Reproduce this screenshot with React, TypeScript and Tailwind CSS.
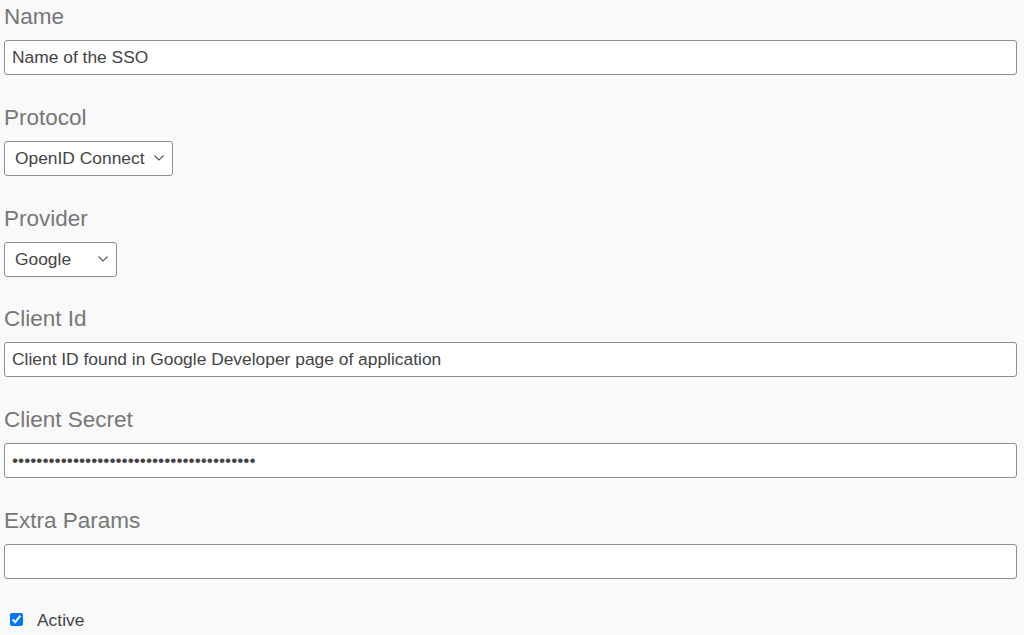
import { useState } from "react";

const labelCls = "block text-[22.5px] leading-[30px] text-[#777777] mb-[8px]";
const inputCls =
  "block w-full h-[35px] rounded-[3px] border border-[#8f8f8f] bg-white px-[7px] text-[17.4px] text-[#444444] outline-none";

function Chevron() {
  return (
    <svg className="pointer-events-none absolute right-[9px] top-[14px]" width="10" height="6" viewBox="0 0 10 6" fill="none">
      <path d="M0.5 0.5 L5 5 L9.5 0.5" stroke="#555" strokeWidth="1.1" />
    </svg>
  );
}

function Select({ value, options, width, onChange }: { value: string; options: string[]; width: string; onChange: (v: string) => void }) {
  return (
    <div className={"relative " + width}>
      <select
        className="block w-full h-[35px] appearance-none rounded-[3px] border border-[#8f8f8f] bg-white pl-[10px] pr-[26px] text-[17.4px] text-[#444444] outline-none"
        value={value}
        onChange={(e) => onChange(e.target.value)}
      >
        {options.map((o) => <option key={o}>{o}</option>)}
      </select>
      <Chevron />
    </div>
  );
}

export default function App() {
  const [form, setForm] = useState({
    name: "Name of the SSO",
    protocol: "OpenID Connect",
    provider: "Google",
    clientId: "Client ID found in Google Developer page of application",
    secret: "abcdefghijklmnopqrstuvwxyz0123456789abcd",
    extra: "",
    active: true,
  });

  return (
    <div className="min-h-[635px] bg-[#f9f9f9] pl-[4px] pr-[7px] pt-[2px] font-['Liberation_Sans',Arial,sans-serif]">
      <div className="mb-[27.8px]">
        <label className={labelCls}>Name</label>
        <input className={inputCls} value={form.name} onChange={(e) => setForm({ ...form, name: e.target.value })} />
      </div>

      <div className="mb-[27.8px]">
        <label className={labelCls}>Protocol</label>
        <Select value={form.protocol} options={["OpenID Connect", "SAML"]} width="w-[169px]" onChange={(v) => setForm({ ...form, protocol: v })} />
      </div>

      <div className="mb-[27.8px]">
        <label className={labelCls}>Provider</label>
        <Select value={form.provider} options={["Google", "Microsoft", "Okta"]} width="w-[113px]" onChange={(v) => setForm({ ...form, provider: v })} />
      </div>

      <div className="mb-[27.8px]">
        <label className={labelCls}>Client Id</label>
        <input className={inputCls} value={form.clientId} onChange={(e) => setForm({ ...form, clientId: e.target.value })} />
      </div>

      <div className="mb-[27.8px]">
        <label className={labelCls}>Client Secret</label>
        <input className={inputCls} type="password" value={form.secret} onChange={(e) => setForm({ ...form, secret: e.target.value })} />
      </div>

      <div className="mb-[29px]">
        <label className={labelCls}>Extra Params</label>
        <input className={inputCls} value={form.extra} onChange={(e) => setForm({ ...form, extra: e.target.value })} />
      </div>

      <label className="flex items-center gap-[14px] pl-[6px] text-[17.4px] leading-[24px] text-[#444444]">
        <input
          type="checkbox"
          className="m-0 h-[13px] w-[13px] accent-[#0075ff]"
          checked={form.active}
          onChange={(e) => setForm({ ...form, active: e.target.checked })}
        />
        Active
      </label>
    </div>
  );
}
